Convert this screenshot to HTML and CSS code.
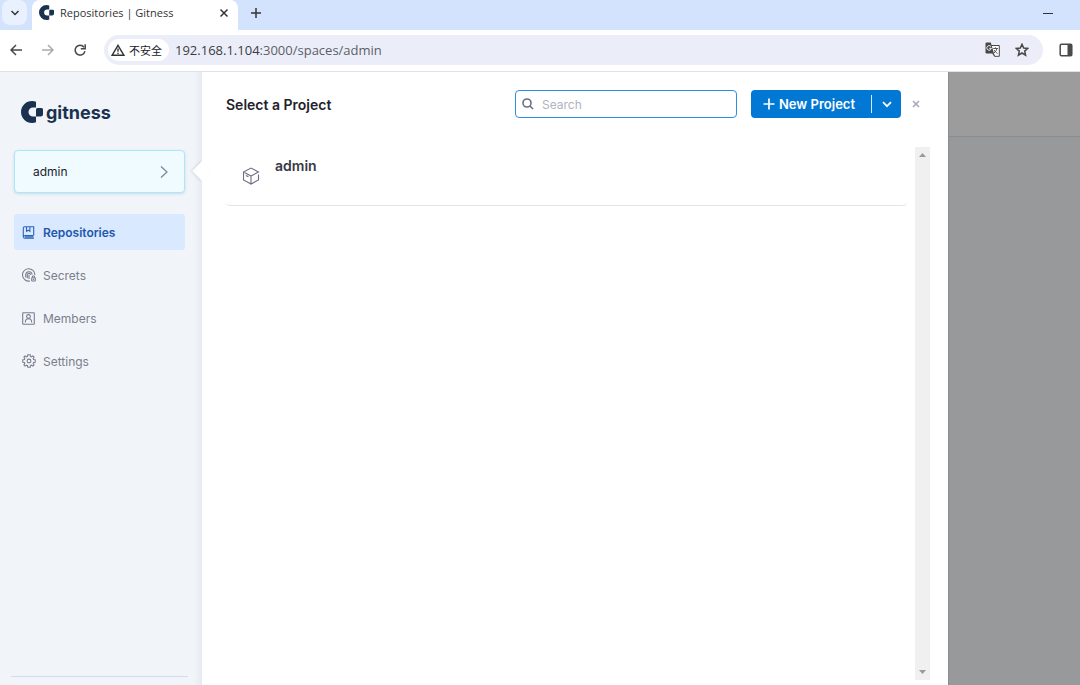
FILE: index.html
```html
<!DOCTYPE html>
<html lang="en">

<head>
  <meta charset="UTF-8">
  <meta name="viewport" content="width=device-width, initial-scale=1.0">
  <title>Repositories | Gitness</title>
  <link rel="stylesheet" href="styles.css">
</head>

<body>
  <!-- browser -->
  <header class="browser">
    <div class="tabs">
      <button class="tab-search" aria-label="Search tabs">
        <svg width="10" height="8" viewBox="0 0 10 8"><path d="M1.5 2 L5 5.5 L8.5 2" /></svg>
      </button>
      <div class="tab">
        <svg class="mark" width="15" height="15" viewBox="0 0 22 22"><path d="M15 .8 C13.800 .3 12.500 0 11 0 A11 11 0 0 0 11 22 C12.500 22 13.800 21.700 15 21.200 V15.500 H12 A4.500 4.500 0 0 1 12 6.500 H15 Z M15 8.500 Q15 7 16.500 7 H20.500 Q22 7 22 8.500 V13 Q22 15.500 19.500 15.500 H15 Z" /></svg>
        <span class="tab-title">Repositories | Gitness</span>
        <button class="tab-close" aria-label="Close tab">
          <svg width="10" height="10" viewBox="0 0 10 10"><path d="M1.500 1.500 L8.500 8.500 M8.500 1.500 L1.500 8.500" /></svg>
        </button>
      </div>
      <button class="tab-new" aria-label="New tab">
        <svg width="10" height="10" viewBox="0 0 10 10"><path d="M5 0 V10 M0 5 H10" /></svg>
      </button>
      <button class="minimize" aria-label="Minimize">
        <svg width="10" height="10" viewBox="0 0 10 10"><path d="M0 5.500 H10" /></svg>
      </button>
    </div>
    <div class="toolbar">
      <button class="nav-btn" aria-label="Back">
        <svg width="12" height="12" viewBox="0 0 12 12"><path d="M12 6 H1.500 M6 1 L1 6 L6 11" /></svg>
      </button>
      <button class="nav-btn off" aria-label="Forward">
        <svg width="12" height="12" viewBox="0 0 12 12"><path d="M0 6 H10.500 M6 1 L11 6 L6 11" /></svg>
      </button>
      <button class="nav-btn" aria-label="Reload">
        <svg width="12" height="12" viewBox="0 0 12 12"><path d="M10 3.200 A4.900 4.900 0 1 0 10.900 7.200" /><path d="M11.200 .3 V4.700 H6.800" /></svg>
      </button>
      <div class="address">
        <button class="secure">
          <svg width="14" height="12" viewBox="0 0 14 12"><path d="M7 1.300 L12.800 11.200 H1.200 Z M7 4.500 V7.800 M7 8.700 V10" /></svg>
          <span>不安全</span>
        </button>
        <span class="url">192.168.1.104<span class="path">:3000/spaces/admin</span></span>
        <button class="icon-btn" aria-label="Translate">
          <svg width="16" height="16" viewBox="0 0 16 16">
            <path d="M6 3.500 H14.300 V14.300 H9.500 L8 11" fill="#fff" stroke="#474747" stroke-width="1" />
            <path d="M1.500 .5 H5.800 L9 11.500 H1.500 Q.5 11.500 .5 10.500 V1.500 Q.5 .5 1.500 .5 Z" fill="#474747" />
            <path d="M9 11.500 L10 14.500 L7 11.500 Z" fill="#474747" />
            <path d="M6 4.600 A2.300 2.300 0 1 0 6.400 6.300 H4.300" fill="none" stroke="#fff" />
            <path d="M8.200 6.500 H13 M10.500 5.300 V6.500 M12 6.500 Q11.500 9 9 11 M9.200 8 Q10.500 10.500 12.500 11.500" fill="none" stroke="#474747" stroke-width=".9" />
          </svg>
        </button>
        <button class="icon-btn" aria-label="Bookmark">
          <svg width="14" height="14" viewBox="0 0 14 14"><path d="M7 1.300 L8.700 5 L12.800 5.400 L9.700 8.100 L10.600 12.200 L7 10 L3.400 12.200 L4.300 8.100 L1.200 5.400 L5.300 5 Z" fill="none" stroke="#474747" stroke-width="1.500" /></svg>
        </button>
      </div>
      <button class="icon-btn" aria-label="Side panel">
        <svg width="14" height="14" viewBox="0 0 14 14"><rect x="1.200" y="1.200" width="11.600" height="11.600" rx="1.200" fill="none" stroke="#4a4a4a" stroke-width="1.500" /><path d="M8.500 1 H13 V13 H8.500 Z" fill="#4a4a4a" /></svg>
      </button>
    </div>
  </header>

  <div class="app">
    <!-- left menu -->
    <aside class="sidebar">
      <a class="logo" href="#">
        <svg class="mark" width="22" height="22" viewBox="0 0 22 22"><path d="M15 .8 C13.800 .3 12.500 0 11 0 A11 11 0 0 0 11 22 C12.500 22 13.800 21.700 15 21.200 V15.500 H12 A4.500 4.500 0 0 1 12 6.500 H15 Z M15 8.500 Q15 7 16.500 7 H20.500 Q22 7 22 8.500 V13 Q22 15.500 19.500 15.500 H15 Z" /></svg>
        <span>gitness</span>
      </a>
      <button class="space">
        <span>admin</span>
        <svg width="8" height="12" viewBox="0 0 8 12"><path d="M1 .5 L7 6 L1 11.500" /></svg>
      </button>
      <nav class="menu">
        <a class="active" href="#">
          <svg width="13" height="13" viewBox="0 0 13 13"><path d="M11.500 9.500 H3 A1.400 1.400 0 0 0 3 12.300 H12 M1.300 11 V2 Q1.300 .7 2.600 .7 H11.700 V9.500 M4.500 .7 V5.300 L6.200 4.200 L7.900 5.300 V.7 M3 10.900 H11.500" /></svg>
          <span>Repositories</span>
        </a>
        <a href="#">
          <svg width="14" height="14" viewBox="0 0 14 14"><path d="M12.900 7 A6.200 6.200 0 1 0 8 13 M3.700 9.600 V7 A3.300 3.300 0 0 1 10.200 6.300 M5.300 10.300 V7.200 A1.700 1.700 0 0 1 8.700 7 M7 7 V11" /><rect x="9.700" y="9.800" width="3.600" height="3.200" rx=".5" /><path d="M10.400 9.800 V8.900 A1.100 1.100 0 0 1 12.600 8.900 V9.800 M11.500 10.800 V12" /></svg>
          <span>Secrets</span>
        </a>
        <a href="#">
          <svg width="13" height="13" viewBox="0 0 13 13"><rect x=".7" y=".7" width="11.600" height="11.600" rx=".5" /><circle cx="6.500" cy="4.500" r="1.900" /><path d="M3.300 10.500 Q3.300 6.700 6.500 6.700 Q9.700 6.700 9.700 10.500" /></svg>
          <span>Members</span>
        </a>
        <a href="#">
          <svg width="14" height="14" viewBox="0 0 14 14"><path d="M5.800 .8 H8.200 L8.500 2.400 L9.500 2.800 L10.900 1.900 L12.100 3.100 L11.200 4.500 L11.600 5.500 L13.200 5.800 V8.200 L11.600 8.500 L11.200 9.500 L12.100 10.900 L10.900 12.100 L9.500 11.200 L8.500 11.600 L8.200 13.200 H5.800 L5.500 11.600 L4.500 11.200 L3.100 12.100 L1.900 10.900 L2.800 9.500 L2.400 8.500 L.8 8.200 V5.800 L2.400 5.500 L2.800 4.500 L1.900 3.100 L3.100 1.900 L4.500 2.800 L5.500 2.400 Z" /><circle cx="7" cy="7" r="1.900" /></svg>
          <span>Settings</span>
        </a>
      </nav>
      <hr class="line">
    </aside>

    <!-- project selector -->
    <main class="drawer">
      <span class="notch"></span>
      <div class="drawer-head">
        <h1>Select a Project</h1>
        <label class="search">
          <svg width="12" height="12" viewBox="0 0 12 12"><circle cx="5" cy="5" r="4" /><path d="M8 8 L11 11" /></svg>
          <input type="text" placeholder="Search" aria-label="Search">
        </label>
        <div class="split">
          <button class="new-project">
            <svg width="12" height="12" viewBox="0 0 12 12"><path d="M6 .5 V11.500 M.5 6 H11.500" /></svg>
            <span>New Project</span>
          </button>
          <button class="more" aria-label="More options">
            <svg width="10" height="7" viewBox="0 0 10 7"><path d="M1 1.200 L5 5.200 L9 1.200" /></svg>
          </button>
        </div>
        <button class="close" aria-label="Close">
          <svg width="8" height="8" viewBox="0 0 8 8"><path d="M1 1 L7 7 M7 1 L1 7" /></svg>
        </button>
      </div>
      <div class="drawer-body">
        <div class="list">
          <a class="project" href="#">
            <svg width="18" height="18" viewBox="0 0 18 18"><path d="M9 17 L1.500 13 V5 L9 1 L16.500 5 L9 9 V17 L16.500 13 V7.500 M1.500 5 L9 9 M3.800 8.400 L6.500 9.800" /></svg>
            <span>admin</span>
          </a>
        </div>
        <div class="scrollbar">
          <svg width="7" height="4" viewBox="0 0 7 4"><path d="M0 4 L3.500 0 L7 4 Z" /></svg>
          <svg width="7" height="4" viewBox="0 0 7 4"><path d="M0 0 L3.500 4 L7 0 Z" /></svg>
        </div>
      </div>
    </main>

    <div class="backdrop">
      <div class="backdrop-head"></div>
    </div>
  </div>
</body>

</html>
```
FILE: styles.css
```css
* {
  box-sizing: border-box;
}

body {
  margin: 0;
  height: 100vh;
  display: flex;
  flex-direction: column;
  font-family: Inter, "Liberation Sans", "Noto Sans CJK SC", sans-serif;
  font-size: 13px;
  color: #22222a;
  overflow: hidden;
}

button {
  display: flex;
  align-items: center;
  justify-content: center;
  padding: 0;
  border: none;
  background: none;
  font: inherit;
  color: inherit;
  cursor: pointer;
}

a {
  color: inherit;
  text-decoration: none;
}

svg {
  display: block;
  flex: none;
}

.mark {
  fill: #1b3150;
}

/* browser */
.browser {
  font-family: "Open Sans", "Noto Sans CJK SC", sans-serif;
  border-bottom: 1px solid #dfe1e3;
}

.tabs {
  display: flex;
  height: 30px;
  background: #d3e2fd;
}

.tab-search {
  width: 25px;
  height: 25px;
  margin: 0 5px 0 2px;
  border-radius: 8px;
  background: #e9f0fe;
}

.tab-search path,
.tab-close path,
.tab-new path,
.minimize path {
  fill: none;
  stroke: #333;
  stroke-width: 1.5;
}

.minimize path {
  stroke-width: 1;
}

.tab {
  display: flex;
  align-items: center;
  width: 206px;
  padding: 0 9px 5px 7px;
  border-radius: 8px 8px 0 0;
  background: #fff;
}

.tab-title {
  flex: 1;
  margin-left: 6px;
  font-size: 11px;
  color: #333;
}

.tab-new {
  height: 25px;
  width: 36px;
}

.minimize {
  width: 30px;
  height: 25px;
  margin-left: auto;
  margin-right: 17px;
}

.toolbar {
  display: flex;
  align-items: center;
  height: 41px;
  padding: 0 7px 1px 0;
  background: #fff;
}

.nav-btn {
  width: 32px;
  height: 28px;
}

.nav-btn path {
  fill: none;
  stroke: #474747;
  stroke-width: 1.5;
}

.nav-btn.off path {
  stroke: #aaa;
}

.address {
  display: flex;
  align-items: center;
  flex: 1;
  height: 30px;
  margin: 0 16px 0 8px;
  padding: 0 14px 0 4px;
  gap: 14px;
  border-radius: 15px;
  background: #ebeef8;
}

.secure {
  height: 22px;
  padding: 0 7px 0 3px;
  gap: 4px;
  border-radius: 11px;
  background: #fff;
  font-family: "Noto Sans CJK SC", sans-serif;
  font-size: 11px;
}

.secure path {
  fill: none;
  stroke: #333;
  stroke-width: 1.4;
}

.url {
  flex: 1;
  margin-left: -8px;
  font-size: 13px;
  color: #3a3c42;
}

.path {
  color: #5c5f68;
}

/* left menu */
.app {
  flex: 1;
  display: flex;
  min-height: 0;
}

.sidebar {
  display: flex;
  flex-direction: column;
  width: 202px;
  padding: 28px 17px 8px 14px;
  background: linear-gradient(to right, #f1f5fa 96%, #e6eaf0);
}

.logo {
  display: flex;
  align-items: center;
  gap: 3px;
  height: 24px;
  margin-left: 7px;
  font-size: 18px;
  font-weight: 700;
  color: #1b3150;
}

.space {
  justify-content: space-between;
  height: 43px;
  margin: 26px 0 21px;
  padding: 0 16px 0 18px;
  border: 1px solid #a8e8fb;
  border-radius: 4px;
  background: #effbff;
  box-shadow: 0 1px 3px rgba(40, 70, 110, 0.16);
  font-size: 12px;
}

.space path {
  fill: none;
  stroke: #7b8294;
  stroke-width: 1.2;
}

.menu {
  display: flex;
  flex-direction: column;
  gap: 7px;
  font-size: 12px;
}

.menu a {
  display: grid;
  grid-template-columns: 14px 1fr;
  align-items: center;
  gap: 7px;
  height: 36px;
  padding-left: 8px;
  border-radius: 3px;
  color: #7b7e8b;
}

.menu svg {
  fill: none;
  stroke: #7b7e8b;
  stroke-width: 1.1;
}

.menu .active {
  background: #d9e9ff;
  font-weight: 600;
  color: #1f57ad;
}

.menu .active svg {
  stroke: #2a64b8;
}

.line {
  align-self: stretch;
  margin: auto -3px 0;
  border: none;
  border-top: 1px solid #d3daea;
}

/* project selector */
.drawer {
  position: relative;
  flex: 1;
  display: flex;
  flex-direction: column;
  min-width: 0;
  padding: 18px 18px 5px 24px;
  background: #fff;
}

.notch {
  position: absolute;
  top: 92px;
  left: -7px;
  width: 14px;
  height: 14px;
  background: #fff;
  transform: rotate(45deg);
  box-shadow: -1px 1px 2px rgba(40, 50, 70, 0.14);
}

.drawer-head {
  display: flex;
  align-items: center;
  height: 28px;
}

h1 {
  flex: 1;
  margin: 0;
  font-size: 14px;
  font-weight: 600;
}

.search {
  display: flex;
  align-items: center;
  width: 222px;
  height: 28px;
  padding: 0 6px;
  gap: 8px;
  border: 1px solid #2f8fdf;
  border-radius: 4px;
}

.search svg {
  fill: none;
  stroke: #6b6d85;
  stroke-width: 1.6;
}

.search input {
  flex: 1;
  min-width: 0;
  padding: 0;
  border: none;
  outline: none;
  background: none;
  font: inherit;
  font-size: 12px;
}

.search input::placeholder {
  color: #b0b3c0;
}

.split {
  display: flex;
  align-items: center;
  height: 28px;
  margin-left: 14px;
  border-radius: 4px;
  background: #0278d5;
  color: #fff;
}

.split path {
  fill: none;
  stroke: #fff;
  stroke-width: 1.7;
}

.new-project {
  justify-content: flex-start;
  width: 120px;
  height: 18px;
  padding-left: 12px;
  gap: 4px;
  font-weight: 600;
}

.more {
  width: 30px;
  height: 18px;
  border-left: 1px solid #d5e9fa;
}

.close {
  width: 29px;
  height: 28px;
}

.close path {
  fill: none;
  stroke: #a6a9bb;
  stroke-width: 1.6;
}

.drawer-body {
  flex: 1;
  display: flex;
  gap: 8px;
  margin-top: 29px;
}

.list {
  flex: 1;
}

.project {
  display: flex;
  height: 59px;
  padding: 10px 16px;
  gap: 15px;
  border-bottom: 1px solid #e4e4e6;
  border-radius: 4px;
  font-size: 14px;
  font-weight: 600;
  color: #383946;
}

.project svg {
  align-self: center;
  fill: none;
  stroke: #6b6d85;
  stroke-width: 1.1;
}

.scrollbar {
  display: flex;
  flex-direction: column;
  align-items: center;
  justify-content: space-between;
  width: 15px;
  padding: 6px 0;
  background: #f0f0f0;
}

.scrollbar path {
  fill: #9a9a9a;
}

/* dimmed page behind */
.backdrop {
  width: 132px;
  border-left: 1px solid #8c8c8e;
  background: #98999b;
}

.backdrop-head {
  height: 65px;
  border-bottom: 1px solid #8b8c8f;
  background: #9c9c9c;
}
```
